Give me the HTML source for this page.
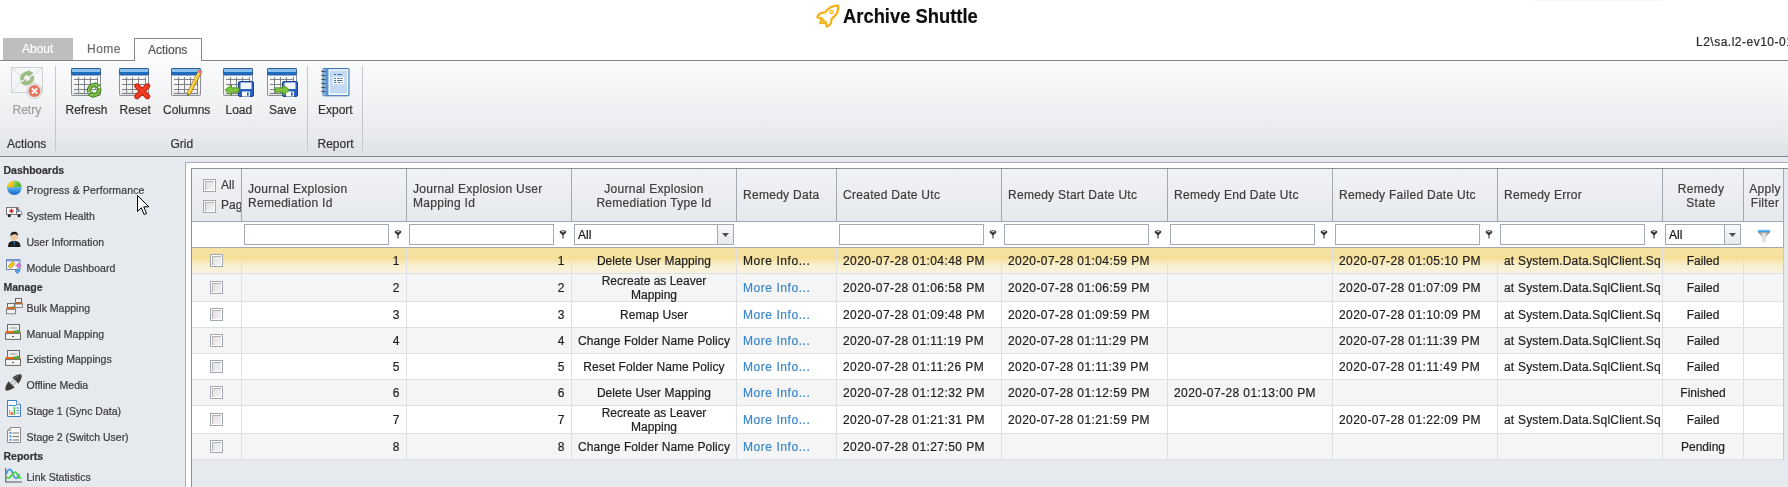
<!DOCTYPE html><html><head><meta charset="utf-8"><style>
*{margin:0;padding:0;box-sizing:border-box}
html,body{width:1788px;height:487px;overflow:hidden;background:#fff}
body{position:relative;font-family:"Liberation Sans", sans-serif;font-size:12px;color:#1e1e1e}
.a{position:absolute}
.t{position:absolute;white-space:nowrap;line-height:14px;-webkit-text-stroke:0.2px currentColor}
svg{position:absolute;overflow:visible}
</style></head><body><div style="position:absolute;left:0;top:0;width:1788px;height:487px;overflow:hidden;will-change:transform"><svg style="left:816px;top:4px" width="24" height="24" viewBox="0 0 24 24">
<g fill="none" stroke="#f4b31c" stroke-width="2.3" stroke-linejoin="round" stroke-linecap="round">
<path d="M22.3,1.7 C16,1.5 11.8,4.5 9.2,8.3 L5.6,8.9 C3.6,9.3 1.5,11.6 1.4,13.4 L5.4,14.3 L9.7,18.6 L10.6,22.6 C12.4,22.5 14.7,20.4 15.1,18.4 L15.7,14.8 C19.5,12.2 22.5,8 22.3,1.7 Z"/>
<path d="M5.4,14.3 L4.4,19.2 L9.7,18.6"/>
</g>
<circle cx="15.6" cy="7.9" r="1.6" fill="none" stroke="#f4b31c" stroke-width="1.2"/>
</svg>
<div class="t" style="left:843px;top:2px;font-size:21px;line-height:28px;font-weight:bold;color:#0d0d0d;transform:scaleX(0.875);transform-origin:0 0;letter-spacing:0px">Archive Shuttle</div>
<div class="a" style="left:1534px;top:0px;width:128px;height:1px;background:#eef9f8"></div>
<div class="a" style="left:3px;top:38px;width:70px;height:23px;background:#bebebe"></div>
<div class="t" style="left:22px;top:41.54px;font-size:12px;line-height:14px;color:#ffffff;font-weight:normal;">About</div>
<div class="t" style="left:87px;top:41.54px;font-size:12px;line-height:14px;color:#6a6a6a;font-weight:normal;letter-spacing:0.5px">Home</div>
<div class="a" style="left:134px;top:38px;width:68px;height:23px;border:1px solid #80868c;border-bottom:none;background:linear-gradient(#fff,#fafbfc)"></div>
<div class="t" style="left:148px;top:42.54px;font-size:12px;line-height:14px;color:#555;font-weight:normal;">Actions</div>
<div class="t" style="left:1696px;top:35.24px;font-size:12px;line-height:14px;color:#2a2a2a;font-weight:normal;letter-spacing:0.5px">L2\sa.l2-ev10-01</div>
<div class="a" style="left:0px;top:60px;width:134px;height:1px;background:#80868c"></div>
<div class="a" style="left:202px;top:60px;width:1586px;height:1px;background:#80868c"></div>
<div class="a" style="left:0px;top:61px;width:1788px;height:95px;background:linear-gradient(#fafbfc 0%,#f3f4f6 35%,#e9ebee 75%,#dfe2e5 100%)"></div>
<div class="a" style="left:0px;top:156px;width:1788px;height:1px;background:#80868c"></div>
<div class="a" style="left:55px;top:66px;width:1px;height:85px;background:#c3c8ce"></div>
<div class="a" style="left:307px;top:66px;width:1px;height:85px;background:#c3c8ce"></div>
<div class="a" style="left:362px;top:66px;width:1px;height:85px;background:#c3c8ce"></div>
<svg style="left:71px;top:68px" width="31" height="30" viewBox="0 0 31 30">
<defs><linearGradient id="gb71" x1="0" y1="0" x2="0" y2="1"><stop offset="0" stop-color="#ffffff"/><stop offset="0.8" stop-color="#f4f4f4"/><stop offset="1" stop-color="#d8dadc"/></linearGradient></defs>
<rect x="0.5" y="0.5" width="29" height="27" rx="1" fill="url(#gb71)" stroke="#8c9096"/>
<rect x="0.5" y="0.5" width="29" height="6.5" rx="1" fill="#1c6cc0" stroke="#2e5c9c"/>
<rect x="1" y="1" width="28" height="3" fill="#88c2ec"/>
<g stroke="#7d8288" stroke-width="1" fill="none">
<path d="M3,11.5 H27 M3,16.5 H27 M3,21.5 H27 M3,25.5 H27"/>
<path d="M7.5,9 V26 M13.5,9 V26 M19.5,9 V26 M26.5,9 V26"/>
</g>
<g transform="translate(15.5,14.5)">
<path d="M2.6,9.6 A5.6,5.6 0 0 1 9.8,2.9" fill="none" stroke="#3f7f1c" stroke-width="4.2"/>
<path d="M12.6,5.6 A5.6,5.6 0 0 1 5.4,12.3" fill="none" stroke="#3f7f1c" stroke-width="4.2"/>
<path d="M8.2,-0.6 L14.2,2.4 L8.8,6.6 Z" fill="#3f7f1c"/>
<path d="M7.0,15.8 L1.0,12.8 L6.4,8.6 Z" fill="#3f7f1c"/>
<path d="M2.6,9.6 A5.6,5.6 0 0 1 9.8,2.9" fill="none" stroke="#7dbb48" stroke-width="2.4"/>
<path d="M12.6,5.6 A5.6,5.6 0 0 1 5.4,12.3" fill="none" stroke="#7dbb48" stroke-width="2.4"/>
<path d="M9.0,0.8 L12.6,2.6 L9.4,5.0 Z" fill="#8cc858"/>
<path d="M6.2,14.4 L2.6,12.6 L5.8,10.2 Z" fill="#8cc858"/>
</g>
</svg>
<svg style="left:119px;top:68px" width="31" height="30" viewBox="0 0 31 30">
<defs><linearGradient id="gb119" x1="0" y1="0" x2="0" y2="1"><stop offset="0" stop-color="#ffffff"/><stop offset="0.8" stop-color="#f4f4f4"/><stop offset="1" stop-color="#d8dadc"/></linearGradient></defs>
<rect x="0.5" y="0.5" width="29" height="27" rx="1" fill="url(#gb119)" stroke="#8c9096"/>
<rect x="0.5" y="0.5" width="29" height="6.5" rx="1" fill="#1c6cc0" stroke="#2e5c9c"/>
<rect x="1" y="1" width="28" height="3" fill="#88c2ec"/>
<g stroke="#7d8288" stroke-width="1" fill="none">
<path d="M3,11.5 H27 M3,16.5 H27 M3,21.5 H27 M3,25.5 H27"/>
<path d="M7.5,9 V26 M13.5,9 V26 M19.5,9 V26 M26.5,9 V26"/>
</g>
<g transform="translate(15,15)" stroke-linecap="round">
<path d="M3,3 L13.5,13.5 M13.5,3 L3,13.5" stroke="#c41a0a" stroke-width="5.4" stroke-linecap="round"/>
<path d="M3,3 L13.5,13.5 M13.5,3 L3,13.5" stroke="#f03c22" stroke-width="3.6" stroke-linecap="round"/>
</g>
</svg>
<svg style="left:171px;top:68px" width="31" height="30" viewBox="0 0 31 30">
<defs><linearGradient id="gb171" x1="0" y1="0" x2="0" y2="1"><stop offset="0" stop-color="#ffffff"/><stop offset="0.8" stop-color="#f4f4f4"/><stop offset="1" stop-color="#d8dadc"/></linearGradient></defs>
<rect x="0.5" y="0.5" width="29" height="27" rx="1" fill="url(#gb171)" stroke="#8c9096"/>
<rect x="0.5" y="0.5" width="29" height="6.5" rx="1" fill="#1c6cc0" stroke="#2e5c9c"/>
<rect x="1" y="1" width="28" height="3" fill="#88c2ec"/>
<g stroke="#7d8288" stroke-width="1" fill="none">
<path d="M3,11.5 H27 M3,16.5 H27 M3,21.5 H27 M3,25.5 H27"/>
<path d="M7.5,9 V26 M13.5,9 V26 M19.5,9 V26 M26.5,9 V26"/>
</g>
<g>
<path d="M16.6,27.8 L16.37,24.31 L27.9,1.78 L31.1,3.42 L19.57,25.95 Z" fill="#f3c531" stroke="#8d6c12" stroke-width="0.7" stroke-linejoin="round"/>
<path d="M17.3,24.8 L28.6,2.6" stroke="#fbe58a" stroke-width="0.9"/>
<path d="M26.76,4.01 L27.9,1.78 L31.1,3.42 L29.96,5.65 Z" fill="#e8708e"/>
<path d="M16.6,27.8 L16.5,26.0 L17.9,26.7 Z" fill="#333"/>
</g>
</svg>
<svg style="left:223px;top:68px" width="31" height="30" viewBox="0 0 31 30">
<defs><linearGradient id="gb223" x1="0" y1="0" x2="0" y2="1"><stop offset="0" stop-color="#ffffff"/><stop offset="0.8" stop-color="#f4f4f4"/><stop offset="1" stop-color="#d8dadc"/></linearGradient></defs>
<rect x="0.5" y="0.5" width="29" height="27" rx="1" fill="url(#gb223)" stroke="#8c9096"/>
<rect x="0.5" y="0.5" width="29" height="6.5" rx="1" fill="#1c6cc0" stroke="#2e5c9c"/>
<rect x="1" y="1" width="28" height="3" fill="#88c2ec"/>
<g stroke="#7d8288" stroke-width="1" fill="none">
<path d="M3,11.5 H27 M3,16.5 H27 M3,21.5 H27 M3,25.5 H27"/>
<path d="M7.5,9 V26 M13.5,9 V26 M19.5,9 V26 M26.5,9 V26"/>
</g>
<g transform="translate(15,13)">
<rect x="0.5" y="0.5" width="15" height="15" rx="1.5" fill="#2a5fc4" stroke="#1b4390"/>
<rect x="2.5" y="1.5" width="11" height="6.5" fill="#f2f5fb"/>
<rect x="4" y="10.5" width="8" height="5" fill="#ffffff"/>
<rect x="9" y="11.3" width="1.7" height="3.4" fill="#2a5fc4"/>
</g><path d="M2,22 L8.5,16.5 V19.8 H16 V24.2 H8.5 V27.5 Z" fill="#7cc23c" stroke="#4d8a1e" stroke-width="0.8"/>
</svg>
<svg style="left:267px;top:68px" width="31" height="30" viewBox="0 0 31 30">
<defs><linearGradient id="gb267" x1="0" y1="0" x2="0" y2="1"><stop offset="0" stop-color="#ffffff"/><stop offset="0.8" stop-color="#f4f4f4"/><stop offset="1" stop-color="#d8dadc"/></linearGradient></defs>
<rect x="0.5" y="0.5" width="29" height="27" rx="1" fill="url(#gb267)" stroke="#8c9096"/>
<rect x="0.5" y="0.5" width="29" height="6.5" rx="1" fill="#1c6cc0" stroke="#2e5c9c"/>
<rect x="1" y="1" width="28" height="3" fill="#88c2ec"/>
<g stroke="#7d8288" stroke-width="1" fill="none">
<path d="M3,11.5 H27 M3,16.5 H27 M3,21.5 H27 M3,25.5 H27"/>
<path d="M7.5,9 V26 M13.5,9 V26 M19.5,9 V26 M26.5,9 V26"/>
</g>
<g transform="translate(15,13)">
<rect x="0.5" y="0.5" width="15" height="15" rx="1.5" fill="#2a5fc4" stroke="#1b4390"/>
<rect x="2.5" y="1.5" width="11" height="6.5" fill="#f2f5fb"/>
<rect x="4" y="10.5" width="8" height="5" fill="#ffffff"/>
<rect x="9" y="11.3" width="1.7" height="3.4" fill="#2a5fc4"/>
</g><path d="M22.5,22 L16,16.5 V19.8 H8 V24.2 H16 V27.5 Z" fill="#7cc23c" stroke="#4d8a1e" stroke-width="0.8"/>
</svg>
<svg style="left:11px;top:67px" width="34" height="32" viewBox="0 0 34 32">
<rect x="0.5" y="0.5" width="31" height="25" fill="#f5f6f7" stroke="#cfd2d5"/>
<path d="M1,1 L16,14 L31,1 M1,25 L12,11 M31,25 L20,11" fill="none" stroke="#d8dadd" stroke-width="1"/>
<g transform="translate(8.5,3.5)">
<path d="M2.6,9.6 A5.6,5.6 0 0 1 9.8,2.9" fill="none" stroke="#9dbd82" stroke-width="3.6"/>
<path d="M12.6,5.6 A5.6,5.6 0 0 1 5.4,12.3" fill="none" stroke="#9dbd82" stroke-width="3.6"/>
<path d="M8.2,-0.6 L14.2,2.4 L8.8,6.6 Z" fill="#9dbd82"/>
<path d="M7.0,15.8 L1.0,12.8 L6.4,8.6 Z" fill="#9dbd82"/>
</g>
<circle cx="23.5" cy="24" r="7.6" fill="#eeeeee" stroke="#c8c8c8" stroke-width="0.8"/>
<circle cx="23.5" cy="24" r="6" fill="#e2755e"/>
<path d="M20.8,21.3 L26.2,26.7 M26.2,21.3 L20.8,26.7" stroke="#fff" stroke-width="1.8"/>
</svg>
<svg style="left:321px;top:68px" width="30" height="30" viewBox="0 0 30 30">
<rect x="2" y="0.5" width="26" height="27.3" rx="0.8" fill="#5b95d4" stroke="#3f76b9"/>
<rect x="2.5" y="1" width="2" height="26.5" fill="#8cc0ee"/>
<rect x="7.5" y="1.2" width="19.8" height="25.8" fill="#ffffff"/>
<rect x="9" y="2.5" width="17" height="23" fill="#c2d9f1"/>
<rect x="11.6" y="9" width="11.6" height="7.2" fill="#ffffff"/>
<g stroke="#3f6fa8" stroke-width="1">
<path d="M13,6.5 H15 M16.5,6.5 H21"/>
<path d="M13,10.5 H15 M16,10.5 H18.5 M19.5,10.5 H21.5 M13,12.5 H15 M16,12.5 H21.5 M13,14.5 H15.5 M17,14.5 H19 M20.5,14.5 H21.5"/>
</g>
<g stroke="#4a4a4a" stroke-width="1.1" fill="none" stroke-linecap="round">
<path d="M0.6,3.3 L4.5,3.8 M0.6,7.3 L4.5,7.8 M0.6,11.2 L4.5,11.7 M0.6,15.3 L4.5,15.8 M0.6,19.2 L4.5,19.7 M0.6,23.3 L4.5,23.8"/>
</g>
</svg>
<div class="t" style="left:12.5px;top:103.44px;font-size:12px;line-height:14px;color:#9b9b9b;font-weight:normal;">Retry</div>
<div class="t" style="left:65.5px;top:103.44px;font-size:12px;line-height:14px;color:#333;font-weight:normal;">Refresh</div>
<div class="t" style="left:119.5px;top:103.44px;font-size:12px;line-height:14px;color:#333;font-weight:normal;">Reset</div>
<div class="t" style="left:163px;top:103.44px;font-size:12px;line-height:14px;color:#333;font-weight:normal;">Columns</div>
<div class="t" style="left:225.5px;top:103.44px;font-size:12px;line-height:14px;color:#333;font-weight:normal;">Load</div>
<div class="t" style="left:269px;top:103.44px;font-size:12px;line-height:14px;color:#333;font-weight:normal;">Save</div>
<div class="t" style="left:318px;top:103.44px;font-size:12px;line-height:14px;color:#333;font-weight:normal;">Export</div>
<div class="t" style="left:7px;top:136.54px;font-size:12px;line-height:14px;color:#333;font-weight:normal;">Actions</div>
<div class="t" style="left:170.5px;top:136.54px;font-size:12px;line-height:14px;color:#333;font-weight:normal;">Grid</div>
<div class="t" style="left:317.5px;top:136.54px;font-size:12px;line-height:14px;color:#333;font-weight:normal;">Report</div>
<div class="a" style="left:0px;top:157px;width:1788px;height:330px;background:#e6e9ee"></div>
<div class="a" style="left:185px;top:162px;width:1603px;height:325px;background:#fff;border-left:1px solid #a8aeb6;border-top:1px solid #a8aeb6"></div>
<div class="t" style="left:3.5px;top:162.96px;font-size:10.5px;line-height:14px;color:#333;font-weight:bold;">Dashboards</div>
<div class="t" style="left:26.5px;top:183.36px;font-size:10.5px;line-height:14px;color:#3a3a3a;font-weight:normal;letter-spacing:0.14px">Progress &amp; Performance</div>
<div class="t" style="left:26.5px;top:209.36px;font-size:10.5px;line-height:14px;color:#3a3a3a;font-weight:normal;">System Health</div>
<div class="t" style="left:26.5px;top:235.06px;font-size:10.5px;line-height:14px;color:#3a3a3a;font-weight:normal;">User Information</div>
<div class="t" style="left:26.5px;top:261.16px;font-size:10.5px;line-height:14px;color:#3a3a3a;font-weight:normal;">Module Dashboard</div>
<div class="t" style="left:3.5px;top:280.36px;font-size:10.5px;line-height:14px;color:#333;font-weight:bold;">Manage</div>
<div class="t" style="left:26.5px;top:300.96px;font-size:10.5px;line-height:14px;color:#3a3a3a;font-weight:normal;">Bulk Mapping</div>
<div class="t" style="left:26.5px;top:327.36px;font-size:10.5px;line-height:14px;color:#3a3a3a;font-weight:normal;">Manual Mapping</div>
<div class="t" style="left:26.5px;top:352.36px;font-size:10.5px;line-height:14px;color:#3a3a3a;font-weight:normal;">Existing Mappings</div>
<div class="t" style="left:26.5px;top:378.16px;font-size:10.5px;line-height:14px;color:#3a3a3a;font-weight:normal;">Offline Media</div>
<div class="t" style="left:26.5px;top:404.26px;font-size:10.5px;line-height:14px;color:#3a3a3a;font-weight:normal;">Stage 1 (Sync Data)</div>
<div class="t" style="left:26.5px;top:430.16px;font-size:10.5px;line-height:14px;color:#3a3a3a;font-weight:normal;">Stage 2 (Switch User)</div>
<div class="t" style="left:3.5px;top:449.16px;font-size:10.5px;line-height:14px;color:#333;font-weight:bold;">Reports</div>
<div class="t" style="left:26.5px;top:469.86px;font-size:10.5px;line-height:14px;color:#3a3a3a;font-weight:normal;">Link Statistics</div>
<svg style="left:6px;top:179px" width="17" height="18" viewBox="0 0 17 18">
<defs><linearGradient id="pieb" x1="0" y1="0" x2="0" y2="1"><stop offset="0.3" stop-color="#8fd4ff"/><stop offset="0.65" stop-color="#3f9be8"/><stop offset="1" stop-color="#1a62c4"/></linearGradient>
<linearGradient id="piey" x1="0" y1="0" x2="1" y2="1"><stop offset="0" stop-color="#ffe24a"/><stop offset="1" stop-color="#e9a90a"/></linearGradient>
<linearGradient id="pieg" x1="0" y1="0" x2="1" y2="1"><stop offset="0" stop-color="#9ade4a"/><stop offset="1" stop-color="#3c9e1e"/></linearGradient></defs>
<ellipse cx="8.3" cy="9.6" rx="7.2" ry="6.6" fill="#1a5fb8" opacity="0.35"/>
<circle cx="8.3" cy="8.6" r="7.2" fill="url(#pieb)"/>
<path d="M8.3,8.6 L1.1,8.3 A7.2,7.2 0 0 1 8.3,1.4 Z" fill="url(#piey)"/>
<path d="M8.3,8.6 L8.3,1.4 A7.2,7.2 0 0 1 15.4,7.4 Z" fill="url(#pieg)"/>
</svg>
<svg style="left:6px;top:207px" width="17" height="11" viewBox="0 0 17 11">
<rect x="0.5" y="0.5" width="10" height="7" fill="#fbfbfb" stroke="#777"/>
<path d="M10.5,2.5 H13 L15.8,5.5 V7.5 H10.5 Z" fill="#fbfbfb" stroke="#777"/>
<rect x="11.3" y="3.2" width="2" height="2" fill="#3a7fd5"/>
<rect x="11" y="0.3" width="1.4" height="2" fill="#c0192c"/>
<path d="M5.5,1.8 V6.2 M3.3,4 H7.7" stroke="#d0202a" stroke-width="1.6"/>
<circle cx="3.3" cy="8.8" r="1.5" fill="#222"/><circle cx="13" cy="8.8" r="1.5" fill="#222"/>
</svg>
<svg style="left:7px;top:231px" width="15" height="17" viewBox="0 0 15 17">
<path d="M1,16 C1,11.5 3,10 7.2,10 C11.4,10 13.5,11.5 13.5,16 Z" fill="#1e1e1e"/>
<path d="M6.5,10 L7.2,15.5 L8,10 Z" fill="#2f7fd6"/>
<ellipse cx="7.2" cy="5.8" rx="3.6" ry="4.2" fill="#f1c9a0"/>
<path d="M3.4,5.5 C3.2,1.8 5,0.8 7.3,0.8 C9.8,0.8 11.2,2 11,5 C10,3.5 8.5,3.2 7.2,3.3 C5.6,3.4 4.3,3.8 3.4,5.5 Z" fill="#1b1b1b"/>
</svg>
<svg style="left:5px;top:258px" width="18" height="17" viewBox="0 0 18 17">
<rect x="1.5" y="1.5" width="13.5" height="10" fill="#f4f6fa" stroke="#6b84b0"/>
<rect x="1.5" y="1.5" width="13.5" height="2" fill="#7fa0d8"/>
<path d="M3,8 L7.5,3.5 L10,6 L5.5,10.5 Z" fill="#f3c521" stroke="#b08a10" stroke-width="0.6"/>
<path d="M11,7.5 L13.5,5 L16,7.5 L13.5,10 Z" fill="#e070e0" stroke="#a040a0" stroke-width="0.6"/>
<path d="M10,13 L12.5,10.5 L15,13 L12.5,15.5 Z" fill="#5aa0e8" stroke="#2a6ab8" stroke-width="0.6"/>
</svg>
<svg style="left:5px;top:298px" width="18" height="17" viewBox="0 0 18 17">
<rect x="10.5" y="0.5" width="6" height="4" fill="#f0f0f0" stroke="#6a6a6a"/>
<rect x="10" y="4.5" width="7.5" height="1.5" fill="#f26a10"/>
<rect x="10" y="6" width="7.5" height="3.5" fill="#f4f4f4" stroke="#6a6a6a" stroke-width="0.8"/>
<rect x="2.5" y="5.5" width="7" height="4" fill="#f0f0f0" stroke="#6a6a6a"/>
<rect x="1.5" y="9.5" width="9" height="1.8" fill="#f26a10"/>
<rect x="1.5" y="11.3" width="9" height="4.5" fill="#f4f4f4" stroke="#6a6a6a" stroke-width="0.8"/>
<path d="M6,8 H9 L10,9 Z" fill="#3cae3c"/>
</svg>
<svg style="left:5px;top:324px" width="17" height="17" viewBox="0 0 17 17">
<rect x="2.5" y="0.5" width="12" height="7" fill="#f0f0f0" stroke="#6a6a6a"/>
<path d="M5,4 H12" stroke="#9a9a9a"/>
<rect x="0.5" y="7" width="15" height="2.4" fill="#f26a10"/>
<rect x="0.5" y="9.4" width="15" height="6" fill="#f4f4f4" stroke="#6a6a6a"/>
<path d="M7,12.5 H9" stroke="#555"/>
<path d="M8,6.5 H12 V5 L15,7.5 L12,10 V8.5 H8 Z" fill="#3cae3c"/>
</svg>
<svg style="left:5px;top:350px" width="17" height="17" viewBox="0 0 17 17">
<rect x="2.5" y="0.5" width="12" height="7" fill="#f0f0f0" stroke="#6a6a6a"/>
<path d="M5,4 H12" stroke="#9a9a9a"/>
<rect x="0.5" y="7" width="15" height="2.4" fill="#f26a10"/>
<rect x="0.5" y="9.4" width="15" height="6" fill="#f4f4f4" stroke="#6a6a6a"/>
<path d="M7,12.5 H9" stroke="#555"/>
<path d="M8,6.5 H12 V5 L15,7.5 L12,10 V8.5 H8 Z" fill="#3cae3c"/>
</svg>
<svg style="left:5px;top:374px" width="18" height="18" viewBox="0 0 18 18">
<g transform="rotate(45 8.5 8.5)">
<path d="M8.5,-2.5 C10.5,-2.5 12.6,3 12.6,5.8 L4.4,5.8 C4.4,3 6.5,-2.5 8.5,-2.5 Z" fill="#3c3c3c"/>
<path d="M4.4,11.2 L12.6,11.2 C12.6,14 10.5,19.5 8.5,19.5 C6.5,19.5 4.4,14 4.4,11.2 Z" fill="#3c3c3c"/>
<path d="M4.4,5.8 H12.6 M4.4,11.2 H12.6" stroke="#777" stroke-width="0.8"/>
<path d="M7,5.8 V11.2 M10,5.8 V11.2" stroke="#b9b9b9" stroke-width="1.3"/>
<path d="M7.2,0 C6.5,2 6.2,3.5 6.2,5" stroke="#8a8a8a" stroke-width="0.8" fill="none"/>
</g>
</svg>
<svg style="left:7px;top:400px" width="15" height="18" viewBox="0 0 15 18">
<path d="M0.5,0.5 H9.5 L13.5,4.5 V16.5 H0.5 Z" fill="#f7fbff" stroke="#3c7cc0"/>
<path d="M9.5,0.5 V4.5 H13.5" fill="#fff" stroke="#3c7cc0" stroke-width="0.8"/>
<path d="M1.5,5.5 H9.5" stroke="#3c8ad8"/>
<rect x="2" y="10" width="1.3" height="5" fill="#f39c12"/>
<rect x="4.3" y="12" width="1.3" height="3" fill="#e02020"/>
<rect x="6.6" y="7" width="1.3" height="8" fill="#2cc02c"/>
<path d="M9.5,8 H12 M9.5,10.5 H12 M9.5,13 H12" stroke="#3a8ae0" stroke-width="1.2"/>
</svg>
<svg style="left:7px;top:427px" width="15" height="17" viewBox="0 0 15 17">
<path d="M3.5,0.5 H13.5 V15.5 H0.5 V3.5 Z" fill="#f7f7f7" stroke="#8a8a8a"/>
<path d="M0.5,3.5 H3.5 V0.5" fill="none" stroke="#8a8a8a" stroke-width="0.8"/>
<rect x="2.5" y="5" width="1.8" height="1.8" fill="#3a7fd5"/>
<rect x="2.5" y="8.5" width="1.8" height="1.8" fill="#3a7fd5"/>
<rect x="2.5" y="12" width="1.8" height="1.8" fill="#3a7fd5"/>
<path d="M5.5,6 H12 M5.5,9.5 H12 M5.5,13 H12" stroke="#777" stroke-width="1"/>
</svg>
<svg style="left:5px;top:467px" width="18" height="16" viewBox="0 0 18 16">
<path d="M0.8,1 V15 H16.8" fill="none" stroke="#555" stroke-width="1.1"/>
<path d="M1.5,7 C3,1 6,1 7.5,6 C9.5,12.5 12.5,13 14.5,7" fill="none" stroke="#3b9ae8" stroke-width="1.6"/>
<path d="M1.5,10 C3.5,12.5 5.5,10 8,6.5 C10.5,3.5 11.5,5.5 13,9 C13.8,11.5 15,11.5 16,10" fill="none" stroke="#39d62a" stroke-width="1.6"/>
</svg>
<svg style="left:137px;top:195px" width="13" height="21" viewBox="0 0 13 21">
<path d="M0.5,0.5 V16.5 L4.3,12.8 L7,19.5 L9.5,18.5 L6.8,11.8 H11.8 Z" fill="#fff" stroke="#000" stroke-width="1" stroke-linejoin="miter"/>
</svg>
<div class="a" style="left:191px;top:168px;width:1597px;height:319px;background:#e6e9ee"></div>
<div class="a" style="left:191px;top:168px;width:1px;height:319px;background:#8a9099"></div>
<div class="a" style="left:191px;top:168px;width:1597px;height:1px;background:#8a9099"></div>
<div class="a" style="left:192px;top:169px;width:1591px;height:52px;background:linear-gradient(#f1f2f5,#e6e9ed)"></div>
<div class="a" style="left:192px;top:221px;width:1592px;height:1px;background:#a3a9b1"></div>
<div class="a" style="left:192px;top:222px;width:1591px;height:25px;background:#fff"></div>
<div class="a" style="left:192px;top:247px;width:1592px;height:1px;background:#a3a9b1"></div>
<div class="a" style="left:241px;top:169px;width:1px;height:52px;background:#a3a9b1"></div>
<div class="a" style="left:406px;top:169px;width:1px;height:52px;background:#a3a9b1"></div>
<div class="a" style="left:571px;top:169px;width:1px;height:52px;background:#a3a9b1"></div>
<div class="a" style="left:736px;top:169px;width:1px;height:52px;background:#a3a9b1"></div>
<div class="a" style="left:836px;top:169px;width:1px;height:52px;background:#a3a9b1"></div>
<div class="a" style="left:1001px;top:169px;width:1px;height:52px;background:#a3a9b1"></div>
<div class="a" style="left:1167px;top:169px;width:1px;height:52px;background:#a3a9b1"></div>
<div class="a" style="left:1332px;top:169px;width:1px;height:52px;background:#a3a9b1"></div>
<div class="a" style="left:1497px;top:169px;width:1px;height:52px;background:#a3a9b1"></div>
<div class="a" style="left:1662px;top:169px;width:1px;height:52px;background:#a3a9b1"></div>
<div class="a" style="left:1743px;top:169px;width:1px;height:52px;background:#a3a9b1"></div>
<div class="a" style="left:1783px;top:169px;width:1px;height:52px;background:#a3a9b1"></div>
<div class="a" style="left:1783px;top:169px;width:1px;height:79px;background:#a3a9b1"></div>
<div class="a" style="left:192px;top:248px;width:1591px;height:25px;background:linear-gradient(#f6e4a6 0%,#f6df98 40%,#f8ecc4 62%,#faf3d8 85%,#fbefe0 96%,#faf6d8 100%)"></div>
<div class="a" style="left:192px;top:273px;width:1592px;height:1px;background:#dcdfe3"></div>
<div class="a" style="left:192px;top:274px;width:1591px;height:27px;background:#f5f5f5"></div>
<div class="a" style="left:192px;top:301px;width:1592px;height:1px;background:#dcdfe3"></div>
<div class="a" style="left:192px;top:302px;width:1591px;height:25px;background:#ffffff"></div>
<div class="a" style="left:192px;top:327px;width:1592px;height:1px;background:#dcdfe3"></div>
<div class="a" style="left:192px;top:328px;width:1591px;height:25px;background:#f5f5f5"></div>
<div class="a" style="left:192px;top:353px;width:1592px;height:1px;background:#dcdfe3"></div>
<div class="a" style="left:192px;top:354px;width:1591px;height:25px;background:#ffffff"></div>
<div class="a" style="left:192px;top:379px;width:1592px;height:1px;background:#dcdfe3"></div>
<div class="a" style="left:192px;top:380px;width:1591px;height:25px;background:#f5f5f5"></div>
<div class="a" style="left:192px;top:405px;width:1592px;height:1px;background:#dcdfe3"></div>
<div class="a" style="left:192px;top:406px;width:1591px;height:27px;background:#ffffff"></div>
<div class="a" style="left:192px;top:433px;width:1592px;height:1px;background:#dcdfe3"></div>
<div class="a" style="left:192px;top:434px;width:1591px;height:25px;background:#f5f5f5"></div>
<div class="a" style="left:192px;top:459px;width:1592px;height:1px;background:#dcdfe3"></div>
<div class="a" style="left:241px;top:248px;width:1px;height:212px;background:#dcdfe3"></div>
<div class="a" style="left:406px;top:248px;width:1px;height:212px;background:#dcdfe3"></div>
<div class="a" style="left:571px;top:248px;width:1px;height:212px;background:#dcdfe3"></div>
<div class="a" style="left:736px;top:248px;width:1px;height:212px;background:#dcdfe3"></div>
<div class="a" style="left:836px;top:248px;width:1px;height:212px;background:#dcdfe3"></div>
<div class="a" style="left:1001px;top:248px;width:1px;height:212px;background:#dcdfe3"></div>
<div class="a" style="left:1167px;top:248px;width:1px;height:212px;background:#dcdfe3"></div>
<div class="a" style="left:1332px;top:248px;width:1px;height:212px;background:#dcdfe3"></div>
<div class="a" style="left:1497px;top:248px;width:1px;height:212px;background:#dcdfe3"></div>
<div class="a" style="left:1662px;top:248px;width:1px;height:212px;background:#dcdfe3"></div>
<div class="a" style="left:1743px;top:248px;width:1px;height:212px;background:#dcdfe3"></div>
<div class="a" style="left:1783px;top:248px;width:1px;height:212px;background:#c8ccd2"></div>
<div class="t" style="left:248px;top:183.00px;line-height:13.5px;color:#3c3c3c;letter-spacing:0.28px">Journal Explosion<br>Remediation Id</div>
<div class="t" style="left:413px;top:183.00px;line-height:13.5px;color:#3c3c3c;letter-spacing:0.28px">Journal Explosion User<br>Mapping Id</div>
<div class="t" style="left:572px;width:164px;top:183.00px;line-height:13.5px;text-align:center;color:#3c3c3c;letter-spacing:0.28px">Journal Explosion<br>Remediation Type Id</div>
<div class="t" style="left:743px;top:188.24px;font-size:12px;line-height:14px;color:#3c3c3c;font-weight:normal;letter-spacing:0.28px">Remedy Data</div>
<div class="t" style="left:843px;top:188.24px;font-size:12px;line-height:14px;color:#3c3c3c;font-weight:normal;letter-spacing:0.28px">Created Date Utc</div>
<div class="t" style="left:1008px;top:188.24px;font-size:12px;line-height:14px;color:#3c3c3c;font-weight:normal;letter-spacing:0.28px">Remedy Start Date Utc</div>
<div class="t" style="left:1174px;top:188.24px;font-size:12px;line-height:14px;color:#3c3c3c;font-weight:normal;letter-spacing:0.28px">Remedy End Date Utc</div>
<div class="t" style="left:1339px;top:188.24px;font-size:12px;line-height:14px;color:#3c3c3c;font-weight:normal;letter-spacing:0.28px">Remedy Failed Date Utc</div>
<div class="t" style="left:1504px;top:188.24px;font-size:12px;line-height:14px;color:#3c3c3c;font-weight:normal;letter-spacing:0.28px">Remedy Error</div>
<div class="t" style="left:1661px;width:80px;top:183.00px;line-height:13.5px;text-align:center;color:#3c3c3c;letter-spacing:0.28px">Remedy<br>State</div>
<div class="t" style="left:1745.5px;width:39.0px;top:183.00px;line-height:13.5px;text-align:center;color:#3c3c3c;letter-spacing:0.28px">Apply<br>Filter</div>
<div class="a" style="left:203px;top:179px;width:13px;height:13px;border:1px solid #a0a7b0;background:#fff"><div class="a" style="left:1px;top:1px;width:9px;height:9px;border-top:1px solid #b4b4b4;border-left:1px solid #b4b4b4;background:linear-gradient(135deg,#e2e2e2,#f2f2f2)"></div></div>
<div class="a" style="left:203px;top:200px;width:13px;height:13px;border:1px solid #a0a7b0;background:#fff"><div class="a" style="left:1px;top:1px;width:9px;height:9px;border-top:1px solid #b4b4b4;border-left:1px solid #b4b4b4;background:linear-gradient(135deg,#e2e2e2,#f2f2f2)"></div></div>
<div class="t" style="left:221px;top:177.64px;font-size:12px;line-height:14px;color:#3c3c3c;font-weight:normal;">All</div>
<div class="a" style="left:221px;top:196px;width:20px;height:20px;overflow:hidden"><div class="t" style="left:0;top:2.34px;color:#3c3c3c">Pag</div></div>
<div class="a" style="left:244px;top:224px;width:145px;height:21px;border:1px solid #a3a9b1;background:#fff"></div>
<svg style="left:393.5px;top:229.5px" width="8" height="10" viewBox="0 0 8 10">
<ellipse cx="4" cy="1.9" rx="3.3" ry="1.55" fill="#353535"/>
<ellipse cx="4" cy="1.7" rx="1.9" ry="0.65" fill="#d8d8d8"/>
<path d="M0.8,2.3 L3.45,5.3 V8.6 H4.55 V5.3 L7.2,2.3 C6,3.2 2,3.2 0.8,2.3 Z" fill="#353535"/>
</svg>
<div class="a" style="left:409px;top:224px;width:145px;height:21px;border:1px solid #a3a9b1;background:#fff"></div>
<svg style="left:558.5px;top:229.5px" width="8" height="10" viewBox="0 0 8 10">
<ellipse cx="4" cy="1.9" rx="3.3" ry="1.55" fill="#353535"/>
<ellipse cx="4" cy="1.7" rx="1.9" ry="0.65" fill="#d8d8d8"/>
<path d="M0.8,2.3 L3.45,5.3 V8.6 H4.55 V5.3 L7.2,2.3 C6,3.2 2,3.2 0.8,2.3 Z" fill="#353535"/>
</svg>
<div class="a" style="left:839px;top:224px;width:145px;height:21px;border:1px solid #a3a9b1;background:#fff"></div>
<svg style="left:988.5px;top:229.5px" width="8" height="10" viewBox="0 0 8 10">
<ellipse cx="4" cy="1.9" rx="3.3" ry="1.55" fill="#353535"/>
<ellipse cx="4" cy="1.7" rx="1.9" ry="0.65" fill="#d8d8d8"/>
<path d="M0.8,2.3 L3.45,5.3 V8.6 H4.55 V5.3 L7.2,2.3 C6,3.2 2,3.2 0.8,2.3 Z" fill="#353535"/>
</svg>
<div class="a" style="left:1004px;top:224px;width:145px;height:21px;border:1px solid #a3a9b1;background:#fff"></div>
<svg style="left:1153.5px;top:229.5px" width="8" height="10" viewBox="0 0 8 10">
<ellipse cx="4" cy="1.9" rx="3.3" ry="1.55" fill="#353535"/>
<ellipse cx="4" cy="1.7" rx="1.9" ry="0.65" fill="#d8d8d8"/>
<path d="M0.8,2.3 L3.45,5.3 V8.6 H4.55 V5.3 L7.2,2.3 C6,3.2 2,3.2 0.8,2.3 Z" fill="#353535"/>
</svg>
<div class="a" style="left:1170px;top:224px;width:145px;height:21px;border:1px solid #a3a9b1;background:#fff"></div>
<svg style="left:1319.5px;top:229.5px" width="8" height="10" viewBox="0 0 8 10">
<ellipse cx="4" cy="1.9" rx="3.3" ry="1.55" fill="#353535"/>
<ellipse cx="4" cy="1.7" rx="1.9" ry="0.65" fill="#d8d8d8"/>
<path d="M0.8,2.3 L3.45,5.3 V8.6 H4.55 V5.3 L7.2,2.3 C6,3.2 2,3.2 0.8,2.3 Z" fill="#353535"/>
</svg>
<div class="a" style="left:1335px;top:224px;width:145px;height:21px;border:1px solid #a3a9b1;background:#fff"></div>
<svg style="left:1484.5px;top:229.5px" width="8" height="10" viewBox="0 0 8 10">
<ellipse cx="4" cy="1.9" rx="3.3" ry="1.55" fill="#353535"/>
<ellipse cx="4" cy="1.7" rx="1.9" ry="0.65" fill="#d8d8d8"/>
<path d="M0.8,2.3 L3.45,5.3 V8.6 H4.55 V5.3 L7.2,2.3 C6,3.2 2,3.2 0.8,2.3 Z" fill="#353535"/>
</svg>
<div class="a" style="left:1500px;top:224px;width:145px;height:21px;border:1px solid #a3a9b1;background:#fff"></div>
<svg style="left:1649.5px;top:229.5px" width="8" height="10" viewBox="0 0 8 10">
<ellipse cx="4" cy="1.9" rx="3.3" ry="1.55" fill="#353535"/>
<ellipse cx="4" cy="1.7" rx="1.9" ry="0.65" fill="#d8d8d8"/>
<path d="M0.8,2.3 L3.45,5.3 V8.6 H4.55 V5.3 L7.2,2.3 C6,3.2 2,3.2 0.8,2.3 Z" fill="#353535"/>
</svg>
<div class="a" style="left:574px;top:224px;width:160px;height:21px;border:1px solid #a3a9b1;background:#fff"></div>
<div class="a" style="left:717px;top:224px;width:17px;height:21px;border:1px solid #a3a9b1;background:linear-gradient(#f7f8fa,#e6e8eb)"></div>
<svg style="left:722.0px;top:233px" width="7" height="4" viewBox="0 0 7 4"><path d="M0,0 H7 L3.5,4 Z" fill="#4a4f55"/></svg>
<div class="t" style="left:578px;top:228.34px;font-size:12px;line-height:14px;color:#111;font-weight:normal;">All</div>
<div class="a" style="left:1665px;top:224px;width:76px;height:21px;border:1px solid #a3a9b1;background:#fff"></div>
<div class="a" style="left:1724px;top:224px;width:17px;height:21px;border:1px solid #a3a9b1;background:linear-gradient(#f7f8fa,#e6e8eb)"></div>
<svg style="left:1729.0px;top:233px" width="7" height="4" viewBox="0 0 7 4"><path d="M0,0 H7 L3.5,4 Z" fill="#4a4f55"/></svg>
<div class="t" style="left:1669px;top:228.34px;font-size:12px;line-height:14px;color:#111;font-weight:normal;">All</div>
<svg style="left:1757px;top:229px" width="14" height="14" viewBox="0 0 14 14">
<defs><linearGradient id="fun" x1="0" y1="0" x2="1" y2="0"><stop offset="0" stop-color="#666b70"/><stop offset="0.5" stop-color="#f0f0f0"/><stop offset="1" stop-color="#666b70"/></linearGradient>
<linearGradient id="funb" x1="0" y1="0" x2="0" y2="1"><stop offset="0" stop-color="#9adcff"/><stop offset="1" stop-color="#1f86d6"/></linearGradient></defs>
<path d="M0.8,3 L13.2,3 L8.6,8.3 V13.6 H5.4 V8.3 Z" fill="url(#fun)"/>
<rect x="0.7" y="0.5" width="12.6" height="2.9" rx="1.4" fill="url(#funb)"/>
<path d="M1.2,3.5 H12.8" stroke="#c9a78a" stroke-width="0.6"/>
</svg>
<div class="a" style="left:210px;top:254px;width:13px;height:13px;border:1px solid #a0a7b0;background:#fff"><div class="a" style="left:1px;top:1px;width:9px;height:9px;border-top:1px solid #b4b4b4;border-left:1px solid #b4b4b4;background:linear-gradient(135deg,#e2e2e2,#f2f2f2)"></div></div>
<div class="t" style="left:242px;width:157.5px;text-align:right;top:253.50px;color:#1e1e1e">1</div>
<div class="t" style="left:407px;width:157.5px;text-align:right;top:253.50px;color:#1e1e1e">1</div>
<div class="t" style="left:572px;width:164px;text-align:center;top:253.50px;color:#1e1e1e;letter-spacing:0.08px">Delete User Mapping</div>
<div class="t" style="left:743px;top:253.50px;font-size:12px;line-height:14px;color:#1e1e1e;font-weight:normal;letter-spacing:0.55px">More Info...</div>
<div class="t" style="left:843px;top:253.50px;font-size:12px;line-height:14px;color:#1e1e1e;font-weight:normal;letter-spacing:0.42px">2020-07-28 01:04:48 PM</div>
<div class="t" style="left:1008px;top:253.50px;font-size:12px;line-height:14px;color:#1e1e1e;font-weight:normal;letter-spacing:0.42px">2020-07-28 01:04:59 PM</div>
<div class="t" style="left:1339px;top:253.50px;font-size:12px;line-height:14px;color:#1e1e1e;font-weight:normal;letter-spacing:0.42px">2020-07-28 01:05:10 PM</div>
<div class="a" style="left:1498px;top:248px;width:163px;height:25px;overflow:hidden"><div class="t" style="left:6px;top:5.50px;color:#1e1e1e;letter-spacing:0.2px">at System.Data.SqlClient.SqlConnection</div></div>
<div class="t" style="left:1663px;width:80px;text-align:center;top:253.50px;color:#1e1e1e">Failed</div>
<div class="a" style="left:210px;top:281px;width:13px;height:13px;border:1px solid #a0a7b0;background:#fff"><div class="a" style="left:1px;top:1px;width:9px;height:9px;border-top:1px solid #b4b4b4;border-left:1px solid #b4b4b4;background:linear-gradient(135deg,#e2e2e2,#f2f2f2)"></div></div>
<div class="t" style="left:242px;width:157.5px;text-align:right;top:280.50px;color:#1e1e1e">2</div>
<div class="t" style="left:407px;width:157.5px;text-align:right;top:280.50px;color:#1e1e1e">2</div>
<div class="t" style="left:572px;width:164px;text-align:center;top:274.00px;line-height:14px;color:#1e1e1e">Recreate as Leaver<br>Mapping</div>
<div class="t" style="left:743px;top:280.50px;font-size:12px;line-height:14px;color:#3b87cd;font-weight:normal;letter-spacing:0.55px">More Info...</div>
<div class="t" style="left:843px;top:280.50px;font-size:12px;line-height:14px;color:#1e1e1e;font-weight:normal;letter-spacing:0.42px">2020-07-28 01:06:58 PM</div>
<div class="t" style="left:1008px;top:280.50px;font-size:12px;line-height:14px;color:#1e1e1e;font-weight:normal;letter-spacing:0.42px">2020-07-28 01:06:59 PM</div>
<div class="t" style="left:1339px;top:280.50px;font-size:12px;line-height:14px;color:#1e1e1e;font-weight:normal;letter-spacing:0.42px">2020-07-28 01:07:09 PM</div>
<div class="a" style="left:1498px;top:274px;width:163px;height:27px;overflow:hidden"><div class="t" style="left:6px;top:6.50px;color:#1e1e1e;letter-spacing:0.2px">at System.Data.SqlClient.SqlConnection</div></div>
<div class="t" style="left:1663px;width:80px;text-align:center;top:280.50px;color:#1e1e1e">Failed</div>
<div class="a" style="left:210px;top:308px;width:13px;height:13px;border:1px solid #a0a7b0;background:#fff"><div class="a" style="left:1px;top:1px;width:9px;height:9px;border-top:1px solid #b4b4b4;border-left:1px solid #b4b4b4;background:linear-gradient(135deg,#e2e2e2,#f2f2f2)"></div></div>
<div class="t" style="left:242px;width:157.5px;text-align:right;top:307.50px;color:#1e1e1e">3</div>
<div class="t" style="left:407px;width:157.5px;text-align:right;top:307.50px;color:#1e1e1e">3</div>
<div class="t" style="left:572px;width:164px;text-align:center;top:307.50px;color:#1e1e1e;letter-spacing:0.08px">Remap User</div>
<div class="t" style="left:743px;top:307.50px;font-size:12px;line-height:14px;color:#3b87cd;font-weight:normal;letter-spacing:0.55px">More Info...</div>
<div class="t" style="left:843px;top:307.50px;font-size:12px;line-height:14px;color:#1e1e1e;font-weight:normal;letter-spacing:0.42px">2020-07-28 01:09:48 PM</div>
<div class="t" style="left:1008px;top:307.50px;font-size:12px;line-height:14px;color:#1e1e1e;font-weight:normal;letter-spacing:0.42px">2020-07-28 01:09:59 PM</div>
<div class="t" style="left:1339px;top:307.50px;font-size:12px;line-height:14px;color:#1e1e1e;font-weight:normal;letter-spacing:0.42px">2020-07-28 01:10:09 PM</div>
<div class="a" style="left:1498px;top:302px;width:163px;height:25px;overflow:hidden"><div class="t" style="left:6px;top:5.50px;color:#1e1e1e;letter-spacing:0.2px">at System.Data.SqlClient.SqlConnection</div></div>
<div class="t" style="left:1663px;width:80px;text-align:center;top:307.50px;color:#1e1e1e">Failed</div>
<div class="a" style="left:210px;top:334px;width:13px;height:13px;border:1px solid #a0a7b0;background:#fff"><div class="a" style="left:1px;top:1px;width:9px;height:9px;border-top:1px solid #b4b4b4;border-left:1px solid #b4b4b4;background:linear-gradient(135deg,#e2e2e2,#f2f2f2)"></div></div>
<div class="t" style="left:242px;width:157.5px;text-align:right;top:333.50px;color:#1e1e1e">4</div>
<div class="t" style="left:407px;width:157.5px;text-align:right;top:333.50px;color:#1e1e1e">4</div>
<div class="t" style="left:572px;width:164px;text-align:center;top:333.50px;color:#1e1e1e;letter-spacing:0.08px">Change Folder Name Policy</div>
<div class="t" style="left:743px;top:333.50px;font-size:12px;line-height:14px;color:#3b87cd;font-weight:normal;letter-spacing:0.55px">More Info...</div>
<div class="t" style="left:843px;top:333.50px;font-size:12px;line-height:14px;color:#1e1e1e;font-weight:normal;letter-spacing:0.42px">2020-07-28 01:11:19 PM</div>
<div class="t" style="left:1008px;top:333.50px;font-size:12px;line-height:14px;color:#1e1e1e;font-weight:normal;letter-spacing:0.42px">2020-07-28 01:11:29 PM</div>
<div class="t" style="left:1339px;top:333.50px;font-size:12px;line-height:14px;color:#1e1e1e;font-weight:normal;letter-spacing:0.42px">2020-07-28 01:11:39 PM</div>
<div class="a" style="left:1498px;top:328px;width:163px;height:25px;overflow:hidden"><div class="t" style="left:6px;top:5.50px;color:#1e1e1e;letter-spacing:0.2px">at System.Data.SqlClient.SqlConnection</div></div>
<div class="t" style="left:1663px;width:80px;text-align:center;top:333.50px;color:#1e1e1e">Failed</div>
<div class="a" style="left:210px;top:360px;width:13px;height:13px;border:1px solid #a0a7b0;background:#fff"><div class="a" style="left:1px;top:1px;width:9px;height:9px;border-top:1px solid #b4b4b4;border-left:1px solid #b4b4b4;background:linear-gradient(135deg,#e2e2e2,#f2f2f2)"></div></div>
<div class="t" style="left:242px;width:157.5px;text-align:right;top:359.50px;color:#1e1e1e">5</div>
<div class="t" style="left:407px;width:157.5px;text-align:right;top:359.50px;color:#1e1e1e">5</div>
<div class="t" style="left:572px;width:164px;text-align:center;top:359.50px;color:#1e1e1e;letter-spacing:0.08px">Reset Folder Name Policy</div>
<div class="t" style="left:743px;top:359.50px;font-size:12px;line-height:14px;color:#3b87cd;font-weight:normal;letter-spacing:0.55px">More Info...</div>
<div class="t" style="left:843px;top:359.50px;font-size:12px;line-height:14px;color:#1e1e1e;font-weight:normal;letter-spacing:0.42px">2020-07-28 01:11:26 PM</div>
<div class="t" style="left:1008px;top:359.50px;font-size:12px;line-height:14px;color:#1e1e1e;font-weight:normal;letter-spacing:0.42px">2020-07-28 01:11:39 PM</div>
<div class="t" style="left:1339px;top:359.50px;font-size:12px;line-height:14px;color:#1e1e1e;font-weight:normal;letter-spacing:0.42px">2020-07-28 01:11:49 PM</div>
<div class="a" style="left:1498px;top:354px;width:163px;height:25px;overflow:hidden"><div class="t" style="left:6px;top:5.50px;color:#1e1e1e;letter-spacing:0.2px">at System.Data.SqlClient.SqlConnection</div></div>
<div class="t" style="left:1663px;width:80px;text-align:center;top:359.50px;color:#1e1e1e">Failed</div>
<div class="a" style="left:210px;top:386px;width:13px;height:13px;border:1px solid #a0a7b0;background:#fff"><div class="a" style="left:1px;top:1px;width:9px;height:9px;border-top:1px solid #b4b4b4;border-left:1px solid #b4b4b4;background:linear-gradient(135deg,#e2e2e2,#f2f2f2)"></div></div>
<div class="t" style="left:242px;width:157.5px;text-align:right;top:385.50px;color:#1e1e1e">6</div>
<div class="t" style="left:407px;width:157.5px;text-align:right;top:385.50px;color:#1e1e1e">6</div>
<div class="t" style="left:572px;width:164px;text-align:center;top:385.50px;color:#1e1e1e;letter-spacing:0.08px">Delete User Mapping</div>
<div class="t" style="left:743px;top:385.50px;font-size:12px;line-height:14px;color:#3b87cd;font-weight:normal;letter-spacing:0.55px">More Info...</div>
<div class="t" style="left:843px;top:385.50px;font-size:12px;line-height:14px;color:#1e1e1e;font-weight:normal;letter-spacing:0.42px">2020-07-28 01:12:32 PM</div>
<div class="t" style="left:1008px;top:385.50px;font-size:12px;line-height:14px;color:#1e1e1e;font-weight:normal;letter-spacing:0.42px">2020-07-28 01:12:59 PM</div>
<div class="t" style="left:1174px;top:385.50px;font-size:12px;line-height:14px;color:#1e1e1e;font-weight:normal;letter-spacing:0.42px">2020-07-28 01:13:00 PM</div>
<div class="t" style="left:1663px;width:80px;text-align:center;top:385.50px;color:#1e1e1e">Finished</div>
<div class="a" style="left:210px;top:413px;width:13px;height:13px;border:1px solid #a0a7b0;background:#fff"><div class="a" style="left:1px;top:1px;width:9px;height:9px;border-top:1px solid #b4b4b4;border-left:1px solid #b4b4b4;background:linear-gradient(135deg,#e2e2e2,#f2f2f2)"></div></div>
<div class="t" style="left:242px;width:157.5px;text-align:right;top:412.50px;color:#1e1e1e">7</div>
<div class="t" style="left:407px;width:157.5px;text-align:right;top:412.50px;color:#1e1e1e">7</div>
<div class="t" style="left:572px;width:164px;text-align:center;top:406.00px;line-height:14px;color:#1e1e1e">Recreate as Leaver<br>Mapping</div>
<div class="t" style="left:743px;top:412.50px;font-size:12px;line-height:14px;color:#3b87cd;font-weight:normal;letter-spacing:0.55px">More Info...</div>
<div class="t" style="left:843px;top:412.50px;font-size:12px;line-height:14px;color:#1e1e1e;font-weight:normal;letter-spacing:0.42px">2020-07-28 01:21:31 PM</div>
<div class="t" style="left:1008px;top:412.50px;font-size:12px;line-height:14px;color:#1e1e1e;font-weight:normal;letter-spacing:0.42px">2020-07-28 01:21:59 PM</div>
<div class="t" style="left:1339px;top:412.50px;font-size:12px;line-height:14px;color:#1e1e1e;font-weight:normal;letter-spacing:0.42px">2020-07-28 01:22:09 PM</div>
<div class="a" style="left:1498px;top:406px;width:163px;height:27px;overflow:hidden"><div class="t" style="left:6px;top:6.50px;color:#1e1e1e;letter-spacing:0.2px">at System.Data.SqlClient.SqlConnection</div></div>
<div class="t" style="left:1663px;width:80px;text-align:center;top:412.50px;color:#1e1e1e">Failed</div>
<div class="a" style="left:210px;top:440px;width:13px;height:13px;border:1px solid #a0a7b0;background:#fff"><div class="a" style="left:1px;top:1px;width:9px;height:9px;border-top:1px solid #b4b4b4;border-left:1px solid #b4b4b4;background:linear-gradient(135deg,#e2e2e2,#f2f2f2)"></div></div>
<div class="t" style="left:242px;width:157.5px;text-align:right;top:439.50px;color:#1e1e1e">8</div>
<div class="t" style="left:407px;width:157.5px;text-align:right;top:439.50px;color:#1e1e1e">8</div>
<div class="t" style="left:572px;width:164px;text-align:center;top:439.50px;color:#1e1e1e;letter-spacing:0.08px">Change Folder Name Policy</div>
<div class="t" style="left:743px;top:439.50px;font-size:12px;line-height:14px;color:#3b87cd;font-weight:normal;letter-spacing:0.55px">More Info...</div>
<div class="t" style="left:843px;top:439.50px;font-size:12px;line-height:14px;color:#1e1e1e;font-weight:normal;letter-spacing:0.42px">2020-07-28 01:27:50 PM</div>
<div class="t" style="left:1663px;width:80px;text-align:center;top:439.50px;color:#1e1e1e">Pending</div></div></body></html>
